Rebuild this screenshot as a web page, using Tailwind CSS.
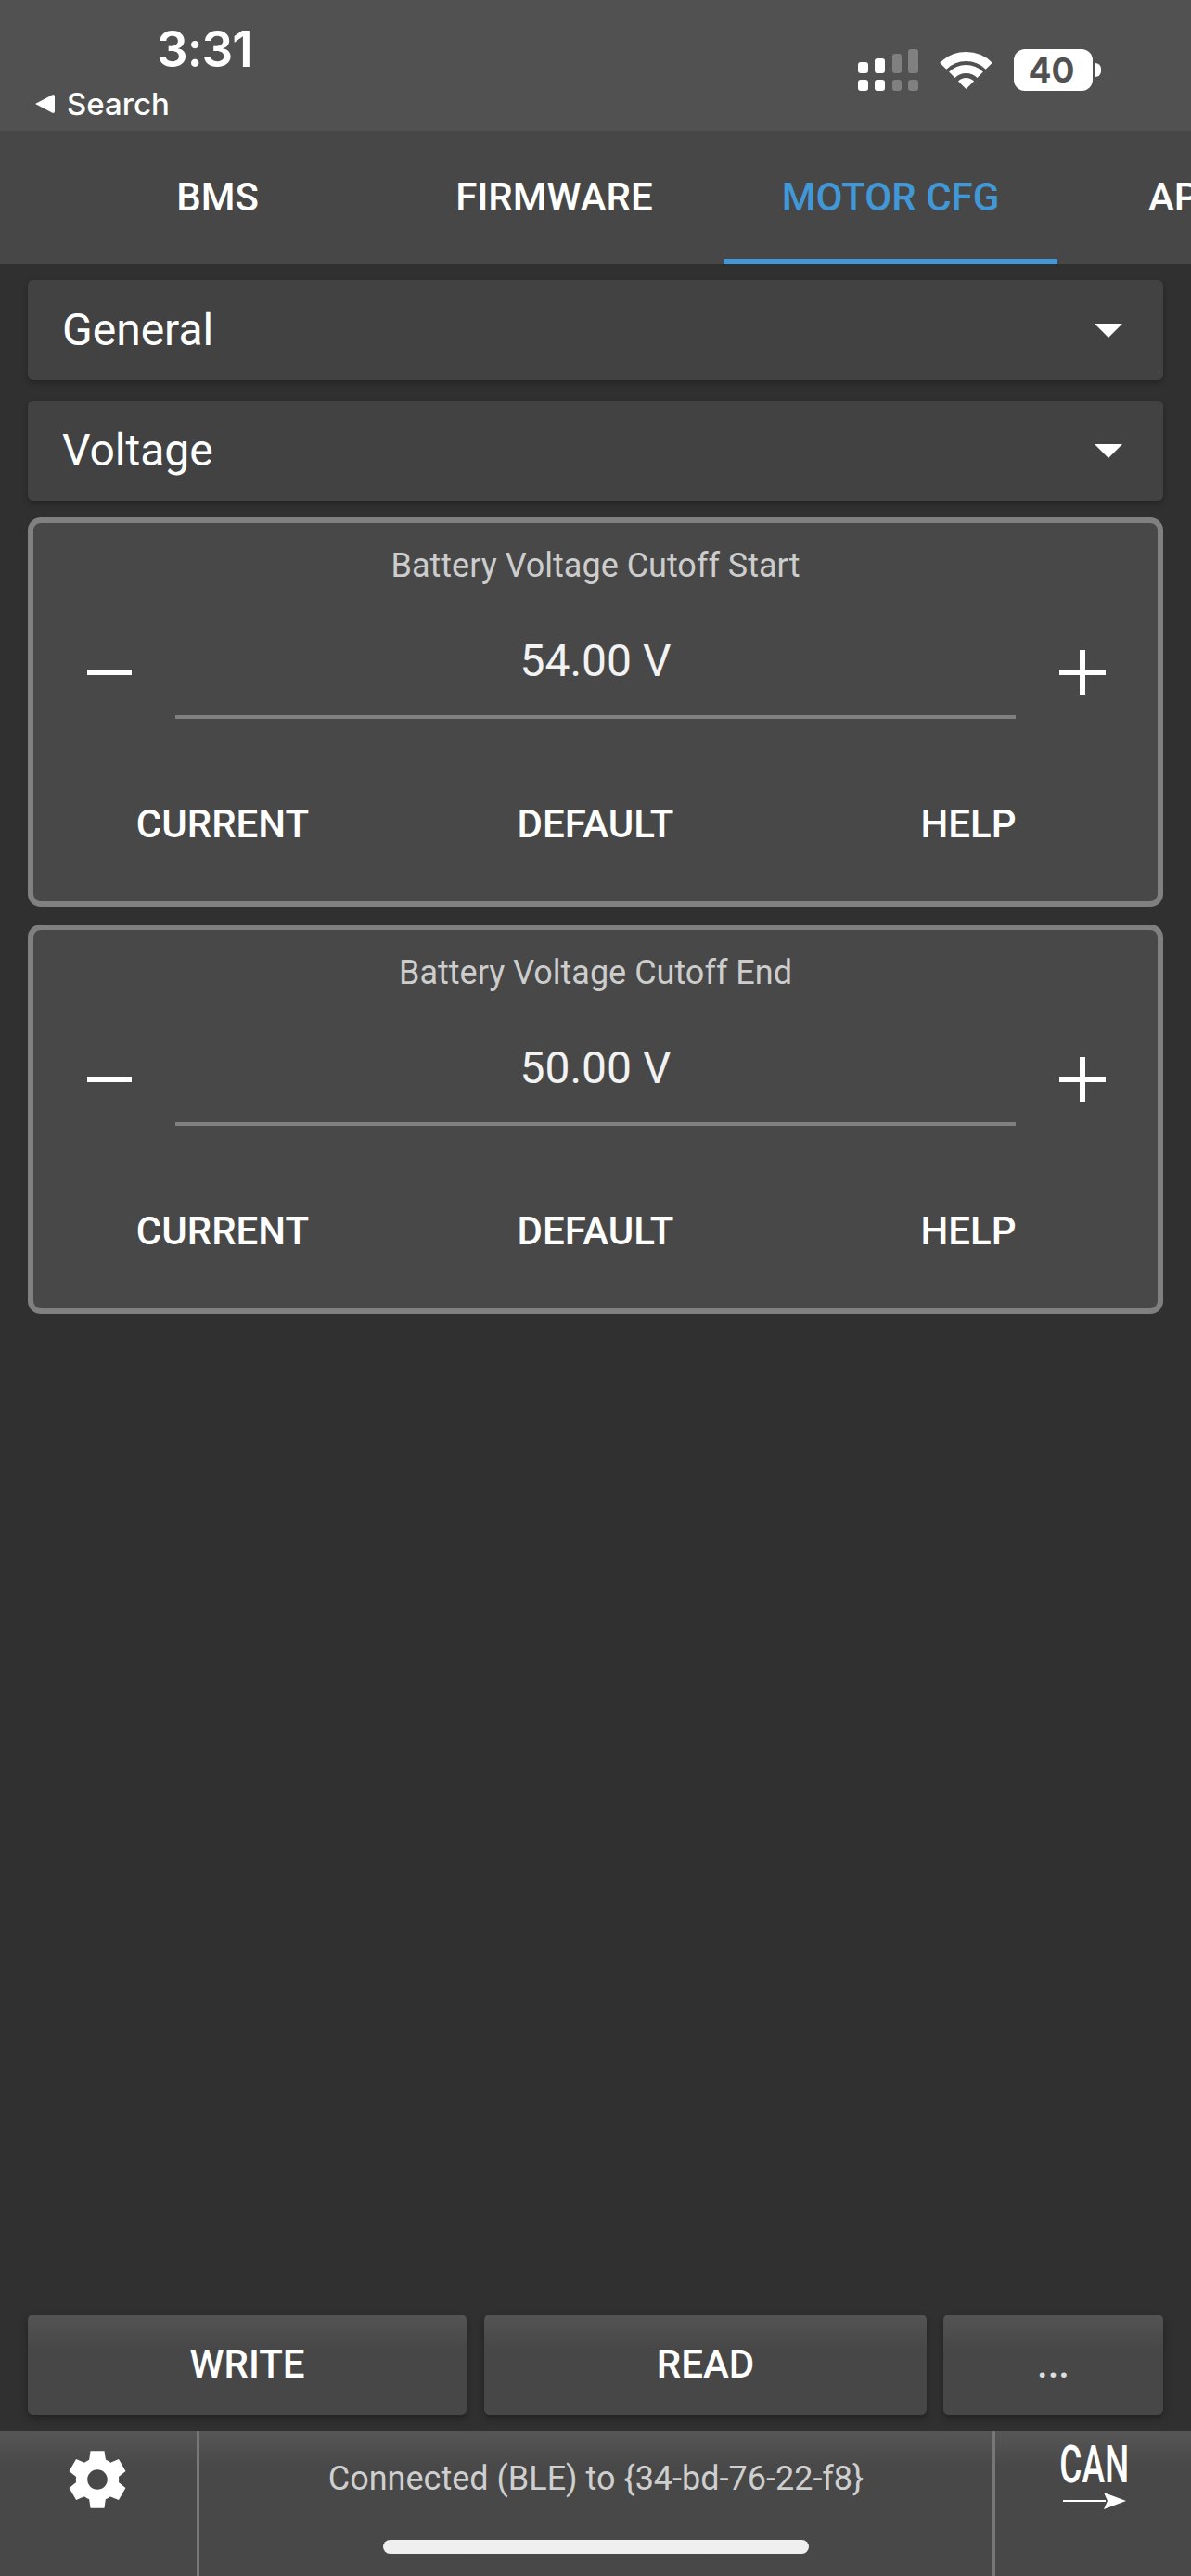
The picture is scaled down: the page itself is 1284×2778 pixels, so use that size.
<!DOCTYPE html>
<html lang="en">
<head>
    <meta charset="UTF-8">
    <meta name="viewport" content="width=device-width, initial-scale=1.0">
    <title>Motor Cfg</title>
    <script src="https://cdn.jsdelivr.net/npm/@tailwindcss/browser@4"></script>
</head>
<body class="bg-[#303030] font-['Roboto',sans-serif] text-white">
<div class="flex flex-col w-[1284px] h-[2778px] overflow-hidden">

    <!-- status bar -->
    <div class="h-[141px] shrink-0 bg-[#515151] flex justify-between font-['Inter',sans-serif]">
        <div class="flex flex-col">
            <div class="h-[94px] pl-[169px] pt-[23px] text-[53px] leading-[60px] font-semibold tracking-[-1px]">3:31</div>
            <div class="flex items-center gap-[14px] pl-[38px] h-[36px]">
                <svg width="21" height="20" viewBox="0 0 21 20"><path d="M0 10 L19 0 Q21 0 21 2 V18 Q21 20 19 20 Z" fill="#fff"/></svg>
                <span class="text-[33px] leading-[36px] font-medium -ml-[1px]">Search</span>
            </div>
        </div>
        <div class="flex pt-[53px] pr-[97px]">
            <svg width="65" height="45" viewBox="0 0 65 45" class="mr-[23px]">
                <rect x="0" y="14" width="11" height="12" rx="3" fill="#fff"/>
                <rect x="18" y="10" width="11" height="16" rx="3" fill="#fff"/>
                <rect x="37" y="5" width="10" height="21" rx="3" fill="#808080"/>
                <rect x="54" y="0" width="11" height="26" rx="3" fill="#808080"/>
                <rect x="0" y="33" width="11" height="12" rx="3" fill="#fff"/>
                <rect x="18" y="33" width="11" height="12" rx="3" fill="#fff"/>
                <rect x="37" y="33" width="10" height="12" rx="3" fill="#808080"/>
                <rect x="54" y="33" width="11" height="12" rx="3" fill="#808080"/>
            </svg>
            <svg width="57" height="43" viewBox="0 0 57 43" class="mt-[2px] mr-[23px]">
                <path d="M3.8 16.3 A35 35 0 0 1 53.2 16.3" fill="none" stroke="#fff" stroke-width="10"/>
                <path d="M13.3 25.8 A21.5 21.5 0 0 1 43.7 25.8" fill="none" stroke="#fff" stroke-width="9"/>
                <path d="M28.5 41 L20 32.5 A12 12 0 0 1 37 32.5 Z" fill="#fff"/>
            </svg>
            <div class="w-[85px] h-[45px] rounded-[12px] bg-white text-[#515151] text-[37px] leading-[45px] font-bold text-center pr-[4px]">40</div>
            <div class="w-[6px] h-[15px] mt-[15px] ml-[3px] bg-white rounded-r-full"></div>
        </div>
    </div>

    <!-- tabs -->
    <div class="h-[144px] shrink-0 bg-[#474747] flex pl-[53px] text-[42px] font-medium overflow-hidden">
        <div class="w-[363px] shrink-0 flex items-center justify-center pb-[2px]">BMS</div>
        <div class="w-[363px] shrink-0 flex items-center justify-center pb-[2px]">FIRMWARE</div>
        <div class="w-[360px] ml-[1px] mr-[2px] shrink-0 flex items-center justify-center text-[#4298d6] border-b-[6px] border-[#4298d6] pt-[4px]">MOTOR CFG</div>
        <div class="w-[363px] shrink-0 flex items-center justify-center whitespace-nowrap pb-[2px]">APP CFG</div>
    </div>

    <!-- content -->
    <div class="flex-1 flex flex-col px-[30px] pt-[17px] pb-[18px]">
        <div class="h-[108px] rounded-[6px] bg-[#424242] shadow-[0_3px_6px_rgba(0,0,0,0.25)] flex items-center justify-between pl-[37px] pr-[44px] text-[48px] mb-[22px]">
            <span>General</span>
            <span class="w-0 h-0 border-x-[15px] border-x-transparent border-t-[15px] border-t-white"></span>
        </div>
        <div class="h-[108px] rounded-[6px] bg-[#424242] shadow-[0_3px_6px_rgba(0,0,0,0.25)] flex items-center justify-between pl-[37px] pr-[44px] text-[48px] mb-[18px]">
            <span>Voltage</span>
            <span class="w-0 h-0 border-x-[15px] border-x-transparent border-t-[15px] border-t-white"></span>
        </div>

        <div class="h-[420px] mb-[19px] rounded-[14px] border-[6px] border-[#808080] bg-[#484848] flex flex-col">
            <div class="h-[91px] flex items-center justify-center text-[36px] text-[#cdcdcd]">Battery Voltage Cutoff Start</div>
            <div class="h-[120px] flex">
                <div class="w-[153px] flex items-center justify-center pt-[20px] pl-[10px]">
                    <svg width="48" height="6" viewBox="0 0 48 6"><rect width="48" height="6" fill="#fff"/></svg>
                </div>
                <div class="flex-1 flex items-center justify-center border-b-[4px] border-[#808080] text-[48px] text-[#f2f2f2]">54.00 V</div>
                <div class="w-[153px] flex items-center justify-center pt-[20px] pr-[10px]">
                    <svg width="50" height="48" viewBox="0 0 50 48"><path d="M0 24 H50 M25 0 V48" stroke="#fff" stroke-width="6"/></svg>
                </div>
            </div>
            <div class="flex-1 grid grid-cols-3 px-[3px] pt-[30px] text-[42px] font-medium">
                <div class="flex items-center justify-center">CURRENT</div>
                <div class="flex items-center justify-center">DEFAULT</div>
                <div class="flex items-center justify-center">HELP</div>
            </div>
        </div>

        <div class="h-[420px] rounded-[14px] border-[6px] border-[#808080] bg-[#484848] flex flex-col">
            <div class="h-[91px] flex items-center justify-center text-[36px] text-[#cdcdcd]">Battery Voltage Cutoff End</div>
            <div class="h-[120px] flex">
                <div class="w-[153px] flex items-center justify-center pt-[20px] pl-[10px]">
                    <svg width="48" height="6" viewBox="0 0 48 6"><rect width="48" height="6" fill="#fff"/></svg>
                </div>
                <div class="flex-1 flex items-center justify-center border-b-[4px] border-[#808080] text-[48px] text-[#f2f2f2]">50.00 V</div>
                <div class="w-[153px] flex items-center justify-center pt-[20px] pr-[10px]">
                    <svg width="50" height="48" viewBox="0 0 50 48"><path d="M0 24 H50 M25 0 V48" stroke="#fff" stroke-width="6"/></svg>
                </div>
            </div>
            <div class="flex-1 grid grid-cols-3 px-[3px] pt-[30px] text-[42px] font-medium">
                <div class="flex items-center justify-center">CURRENT</div>
                <div class="flex items-center justify-center">DEFAULT</div>
                <div class="flex items-center justify-center">HELP</div>
            </div>
        </div>

        <!-- write / read -->
        <div class="mt-auto flex h-[108px] text-[42px] font-medium">
            <div class="w-[473px] mr-[19px] pb-[2px] rounded-[6px] bg-gradient-to-b from-[#545454] to-[#474747] to-[35%] shadow-[0_4px_8px_rgba(0,0,0,0.3)] flex items-center justify-center">WRITE</div>
            <div class="w-[477px] mr-[18px] pb-[2px] rounded-[6px] bg-gradient-to-b from-[#545454] to-[#474747] to-[35%] shadow-[0_4px_8px_rgba(0,0,0,0.3)] flex items-center justify-center">READ</div>
            <div class="w-[237px] pb-[2px] rounded-[6px] bg-gradient-to-b from-[#545454] to-[#474747] to-[35%] shadow-[0_4px_8px_rgba(0,0,0,0.3)] flex items-center justify-center text-[#dddddd]">...</div>
        </div>
    </div>

    <!-- footer -->
    <div class="h-[156px] shrink-0 bg-gradient-to-b from-[#565656] to-[#484848] to-[25%] flex">
        <div class="w-[212px] flex justify-center pt-[15px] pr-[2px]">
            <svg width="74" height="74" viewBox="0 0 24 24" fill="#fff"><path d="M19.44 12.99l-.01.02c.04-.33.08-.67.08-1.01 0-.34-.03-.66-.07-.99l.01.02 2.44-1.92-2.43-4.22-2.87 1.16.01.01c-.52-.4-1.09-.74-1.71-1h.01L14.44 2H9.57l-.44 3.07h.01c-.62.26-1.19.6-1.71 1l.01-.01-2.88-1.17-2.44 4.22 2.44 1.92.01-.02c-.04.33-.07.65-.07.99 0 .34.03.68.08 1.01l-.01-.02-2.1 1.65-.33.26 2.43 4.2 2.88-1.15-.02-.04c.53.41 1.1.75 1.73 1.01h-.03L9.58 22h4.85s.03-.18.06-.42l.38-2.65h-.01c.62-.26 1.2-.6 1.73-1.01l-.02.04 2.88 1.15 2.43-4.2s-.14-.12-.33-.26l-2.11-1.66zM12 15.5c-1.93 0-3.5-1.57-3.5-3.5s1.57-3.5 3.5-3.5 3.5 1.57 3.5 3.5-1.57 3.5-3.5 3.5z"/></svg>
        </div>
        <div class="w-[861px] border-x-[3px] border-[#777777] flex flex-col items-center">
            <div class="h-[102px] flex items-center text-[36px] text-[#cfcfcf]">Connected (BLE) to {34-bd-76-22-f8}</div>
            <div class="w-[459px] h-[15px] mt-[15px] rounded-full bg-[#efefef]"></div>
        </div>
        <div class="flex-1 flex flex-col items-center pt-[13px] pl-[2px]">
            <div class="text-[56px] leading-[46px] h-[46px] font-medium scale-x-[0.66]">CAN</div>
            <svg width="68" height="18" viewBox="0 0 68 18" class="mt-[7px]"><path d="M0 9 H46" stroke="#fff" stroke-width="2"/><path d="M44 0 L68 9 L44 18 L48 9 Z" fill="#fff"/></svg>
        </div>
    </div>
</div>
</body>
</html>
